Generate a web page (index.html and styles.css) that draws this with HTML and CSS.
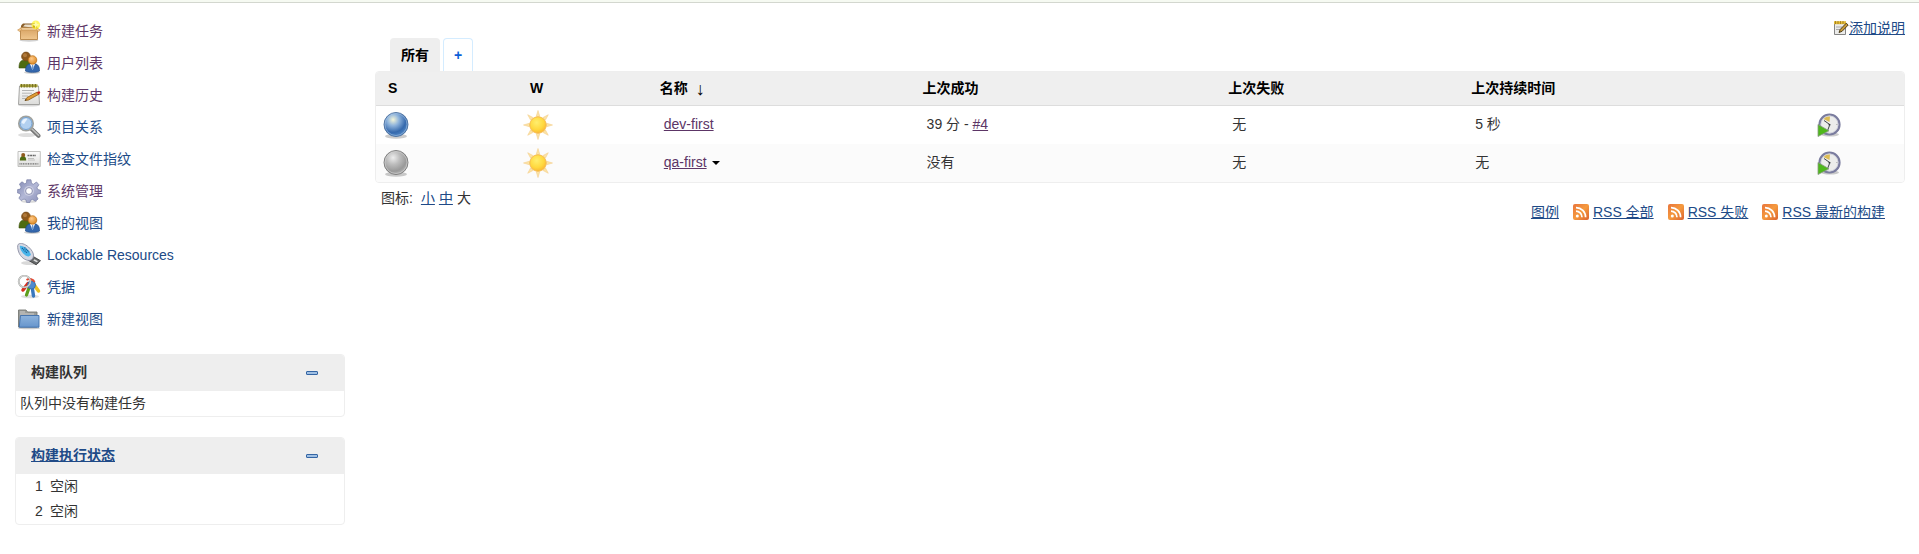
FILE: index.html
```html
<!DOCTYPE html>
<html lang="zh-CN">
<head>
<meta charset="utf-8">
<title>所有 [Jenkins]</title>
<link rel="stylesheet" href="styles.css">
</head>
<body>
<svg class="defs" width="0" height="0" aria-hidden="true">
  <defs>
    <radialGradient id="gBlue" cx="0.38" cy="0.3" r="0.7"><stop offset="0" stop-color="#f4f5d8"/><stop offset="0.35" stop-color="#8fb4dc"/><stop offset="0.75" stop-color="#3569ad"/><stop offset="1" stop-color="#4f86c4"/></radialGradient>
    <radialGradient id="gGrey" cx="0.38" cy="0.3" r="0.7"><stop offset="0" stop-color="#ededed"/><stop offset="0.4" stop-color="#bdbdbd"/><stop offset="0.8" stop-color="#999"/><stop offset="1" stop-color="#b0b0b0"/></radialGradient>
    <radialGradient id="gSun" cx="0.42" cy="0.35" r="0.7"><stop offset="0" stop-color="#ffee6e"/><stop offset="0.6" stop-color="#ffd93f"/><stop offset="1" stop-color="#f9b233"/></radialGradient>
    <radialGradient id="gHead" cx="0.4" cy="0.35" r="0.7"><stop offset="0" stop-color="#ffc98a"/><stop offset="1" stop-color="#d9861c"/></radialGradient>
    <linearGradient id="gBox" x1="0" y1="0" x2="0" y2="1"><stop offset="0" stop-color="#d9a566"/><stop offset="1" stop-color="#f0c78e"/></linearGradient>
    <linearGradient id="gPaper" x1="0" y1="0" x2="0" y2="1"><stop offset="0" stop-color="#fdfdfd"/><stop offset="1" stop-color="#dcdcda"/></linearGradient>
    <linearGradient id="gFolder" x1="0" y1="0" x2="0" y2="1"><stop offset="0" stop-color="#8db3dd"/><stop offset="1" stop-color="#6795cc"/></linearGradient>
    <linearGradient id="gRss" x1="0" y1="0" x2="1" y2="1"><stop offset="0" stop-color="#e8743c"/><stop offset="0.5" stop-color="#f59a3e"/><stop offset="1" stop-color="#dc6330"/></linearGradient>
    <linearGradient id="gGear" x1="0" y1="0" x2="1" y2="1"><stop offset="0" stop-color="#8289b4"/><stop offset="0.5" stop-color="#b3b8d6"/><stop offset="1" stop-color="#8a8fb8"/></linearGradient>
    <symbol id="people" viewBox="0 0 24 24">
      <path d="M2 17c0-5 1-8 6-8s6 3 6 8z" fill="#4e6b12" stroke="#3c530c" stroke-width=".6"/>
      <circle cx="9" cy="5.5" r="4.4" fill="#8f5a1d" stroke="#6f4413" stroke-width=".7"/><circle cx="8" cy="4.2" r="2" fill="#b98242" opacity=".8"/>
      <ellipse cx="15" cy="21.5" rx="8" ry="1.5" fill="#000" opacity=".18"/>
      <path d="M8.500 20c0-4 1-7.500 7-7.500s7 3.500 7 7.500c-2 1.800-12 1.800-14 0z" fill="#3468ae" stroke="#204a87" stroke-width=".7"/>
      <path d="M13 13l2.500 6 2.500-6z" fill="#fff"/><path d="M15 14h1.200l.5 3.500-1.100 1.500-1.100-1.500z" fill="#6e97cd"/>
      <circle cx="15.500" cy="9" r="4.300" fill="url(#gHead)" stroke="#b96c12" stroke-width=".7"/>
    </symbol>
    <symbol id="sun" viewBox="0 0 32 32">
      <g fill="#fbe3a6" stroke="#f5cf8b" stroke-width=".6">
        <path d="M14.200 7.500L16 1.500l1.800 6z"/>
        <path d="M14.200 7.500L16 1.500l1.800 6z" transform="rotate(45 16 16)"/><path d="M14.200 7.500L16 1.500l1.800 6z" transform="rotate(90 16 16)"/><path d="M14.200 7.500L16 1.500l1.800 6z" transform="rotate(135 16 16)"/><path d="M14.200 7.500L16 1.500l1.800 6z" transform="rotate(180 16 16)"/><path d="M14.200 7.500L16 1.500l1.800 6z" transform="rotate(225 16 16)"/><path d="M14.200 7.500L16 1.500l1.800 6z" transform="rotate(270 16 16)"/><path d="M14.200 7.500L16 1.500l1.800 6z" transform="rotate(315 16 16)"/>
      </g>
      <circle cx="16" cy="16" r="8.200" fill="url(#gSun)" stroke="#f6b94a" stroke-width=".9"/>
    </symbol>
    <symbol id="build" viewBox="0 0 24 24">
      <ellipse cx="13" cy="21.500" rx="9" ry="2" fill="#000" opacity=".2"/>
      <circle cx="12.500" cy="11.500" r="10" fill="#ecedeb" stroke="#7a7c9e" stroke-width="2.200"/>
      <circle cx="12.500" cy="11.500" r="8.600" fill="none" stroke="#c3c4d4" stroke-width=".7"/>
      <path d="M12.500 9L6.500 6A8 8 0 0 1 13 3.600z" fill="#dcbc55"/>
      <path d="M7 7.500l5 3.500M12.500 12.500l-1.700 4.500" stroke="#2e3436" stroke-width=".9" fill="none"/><circle cx="12.500" cy="11.700" r="1" fill="#2e3436"/>
      <path d="M19.300 11.500h1.200" stroke="#aaa"/>
      <path d="M1 11.500l11 6.300L1 23.500z" fill="#4fb81c" stroke="#8a9a84" stroke-width=".8"/>
    </symbol>
    <symbol id="rss" viewBox="0 0 16 16">
      <rect width="16" height="16" rx="2" fill="url(#gRss)"/>
      <circle cx="4.300" cy="11.900" r="1.500" fill="#fff"/>
      <path d="M3 7.200a6 6 0 0 1 6 6M3 3.600a9.500 9.500 0 0 1 9.600 9.600" fill="none" stroke="#fff" stroke-width="1.700"/>
    </symbol>
    <symbol id="minus" viewBox="0 0 12 4">
      <rect x=".5" y=".5" width="11" height="3" rx=".5" fill="#9fbfe3" stroke="#3465a4"/>
    </symbol>
  </defs>
</svg>
<div class="topbar"></div>
<div class="layout">
  <aside class="side">
    <nav class="tasks">
      <a class="visited" href="#newJob"><svg class="ico" viewBox="0 0 24 24"><ellipse cx="12" cy="21.300" rx="9.500" ry="1.400" fill="#000" opacity=".18"/><path d="M4 6.500L6 4.500h12l2 2v4H4z" fill="#8a5e28"/><path d="M6 7.500l2-2h8v3z" fill="#eadfcb"/><path d="M3.500 10h17v10.500h-17z" fill="url(#gBox)" stroke="#b07a36" stroke-width=".8"/><path d="M4 9L.6 11l2 1.500L6 9.600zM20 9l3.400 2-2 1.500L18 9.600z" fill="#f0c78e" stroke="#c28c48" stroke-width=".6"/><path d="M3.500 8.800h17L19 11H5z" fill="#f5d5a6" stroke="#c28c48" stroke-width=".5"/><circle cx="18.800" cy="5.800" r="4.400" fill="#fff200" opacity=".6"/><path d="M18.800 2l1 2.700 2.900 1.100-2.900 1-1 2.900-1-2.900-2.900-1 2.900-1.100z" fill="#fffcb0"/></svg>新建任务</a>
      <a class="visited" href="#people"><svg class="ico"><use href="#people"/></svg>用户列表</a>
      <a class="visited" href="#builds"><svg class="ico" viewBox="0 0 24 24"><ellipse cx="12" cy="22.300" rx="11" ry="1.300" fill="#000" opacity=".15"/><path d="M2.500 3h19l1 18.500h-21z" fill="url(#gPaper)" stroke="#9b9b98" stroke-width=".9"/><path d="M3 1.300h17.500v2.900H3z" fill="#a8a23c"/><path d="M4.500 1v3.500M7.200 1v3.500M10 1v3.500M12.800 1v3.500M15.600 1v3.500M18.400 1v3.500" stroke="#716c1f"/><path d="M5 7.500h12M5 10.200h10M5 13h6M5 15.500h4" stroke="#b5b5b5"/><path d="M8 17.500l2-3L20.300 9l1.500 2.300L11.500 17z" fill="#e09a34" stroke="#8a5b13" stroke-width=".8"/><path d="M20 9.200l1.500-.8c1.500-.4 2.200 1.300 1.200 2.200l-1.200.8z" fill="#cc2a1c"/><path d="M7.800 17.700l1-1.500.9.900z" fill="#222"/></svg>构建历史</a>
      <a href="#relations"><svg class="ico" viewBox="0 0 24 24"><ellipse cx="10" cy="20" rx="9" ry="2" fill="#000" opacity=".13"/><path d="M14.500 14l7 6.800" stroke="#777" stroke-width="4" stroke-linecap="round"/><path d="M14.500 13.500l7 6.800" stroke="#bfc0be" stroke-width="1.600" stroke-linecap="round"/><circle cx="9" cy="8.500" r="7.200" fill="#c4dbf3" stroke="#a0a29e" stroke-width="1.700"/><circle cx="9" cy="8.500" r="6" fill="#b2d0f0" stroke="#729fcf"/><path d="M4.500 8a4.700 4.700 0 0 1 6-4.200L7 9z" fill="#eef6ff" opacity=".9"/></svg>项目关系</a>
      <a href="#fingerprint"><svg class="ico" viewBox="0 0 24 24"><path d="M1 4.500h22.300v15H1z" fill="url(#gPaper)" stroke="#bcbcba" stroke-width=".9"/><path d="M2.800 13.500c0-3 1-4.500 3.200-4.500s3.200 1.500 3.200 4.500z" fill="#4e6b12"/><circle cx="6.200" cy="8" r="2" fill="#8f5a1d"/><path d="M10.500 8.500h8.500" stroke="#666" stroke-width="1.400" stroke-dasharray="2 .6"/><path d="M11 11.500h6M11 13h7" stroke="#c0c0be"/><path d="M2.500 16.800h19" stroke="#666" stroke-width="1.200" stroke-dasharray="1 .7"/></svg>检查文件指纹</a>
      <a class="visited" href="#manage"><svg class="ico" viewBox="0 0 24 24"><ellipse cx="12" cy="22.500" rx="8" ry="1.300" fill="#000" opacity=".15"/><path d="M9.800.8h4.200l.5 3.600 2 .8 3-2.200 2.400 2.700-1.900 3 .8 1.900 2.700.6v3.200l-3.100.7-.9 2 1.600 2.900-2.700 2.300-2.800-1.900-2 .8-.7 2.300H9.600L9 20.900l-2-.8-2.900 1.500-2.200-2.500 1.800-2.900-.7-1.700L.6 14v-3.400l2.700-.5.8-2-1.700-3L5 2.800l2.700 2 1.600-.6z" fill="url(#gGear)" stroke="#797fa6" stroke-width=".7"/><circle cx="12" cy="12" r="5" fill="#c9cce0"/><circle cx="12" cy="12" r="3.400" fill="#fff" stroke="#8085a9" stroke-width=".9"/></svg>系统管理</a>
      <a href="#my-views"><svg class="ico"><use href="#people"/></svg>我的视图</a>
      <a href="#lockable"><svg class="ico" viewBox="0 0 24 24"><ellipse cx="13" cy="20" rx="9" ry="2" fill="#000" opacity=".15"/><path d="M14.500 12.500l9 5.200-4.300 4.100-8-4.600z" fill="#66696a" stroke="#333" stroke-width=".8"/><path d="M17.500 16.200l3.500 2-1.300 1.100-3.400-1.900z" fill="#ddd"/><path d="M1.200 1.400C3.500-.8 8 1 11.500 4c3.300 2.800 5.300 6.300 5 9-.3 2.400-2 4.200-4 4.400C8 17.600 3.500 14 1.700 9 .6 6 .2 2.600 1.200 1.400z" fill="#d5d8e3" stroke="#8d90a4" stroke-width=".9"/><path d="M2.800 3c2-1.200 10 3.500 11.200 9l-2.400 1.500C7 13 3 7.500 2.800 3z" fill="#48b4ea"/><path d="M5 5l5 5M7.500 4.500L12 9" stroke="#1b5e95" stroke-width="1.300" stroke-dasharray="1.200 .7"/></svg>Lockable Resources</a>
      <a href="#credentials"><svg class="ico" viewBox="0 0 24 24"><ellipse cx="13" cy="21.500" rx="9" ry="1.800" fill="#000" opacity=".13"/><g fill="none" stroke-linecap="round"><path d="M11 8.500L6 15" stroke="#d7301f" stroke-width="3.500"/><path d="M15 7l6.500 9" stroke="#e9c022" stroke-width="3.500"/><path d="M13 10L9.500 20" stroke="#5d9e1c" stroke-width="3.200"/><path d="M15 11l1.500 10" stroke="#3a78bd" stroke-width="3.400"/></g><circle cx="14.500" cy="10" r="4" fill="#4f8bce" stroke="#2c64a6" stroke-width=".7"/><path d="M9.500 5a5 4 0 0 1 8 2" stroke="#e34b36" stroke-width="2" fill="none"/><circle cx="7.500" cy="6.500" r="5.800" fill="none" stroke="#a5a7a4" stroke-width="1.800"/><circle cx="7.500" cy="6.500" r="5.800" fill="none" stroke="#eee" stroke-width=".7"/></svg>凭据</a>
      <a href="#newView"><svg class="ico" viewBox="0 0 24 24"><path d="M1.500 20V3h7.500l1.500 2H20v15z" fill="#9b9d99" stroke="#777975" stroke-width=".9"/><path d="M3 5h5M3 7h14" stroke="#ccc"/><ellipse cx="12" cy="21.200" rx="11" ry="1" fill="#000" opacity=".2"/><path d="M3.500 8.500h18.500v11.700H2.200z" fill="url(#gFolder)" stroke="#3f6fab" stroke-width=".9"/></svg>新建视图</a>
    </nav>
    <section class="pane">
      <header class="pane-head"><span>构建队列</span><button type="button" class="fold" aria-label="折叠构建队列"><svg><use href="#minus"/></svg></button></header>
      <p class="queue">队列中没有构建任务</p>
    </section>
    <section class="pane">
      <header class="pane-head"><a href="#computer">构建执行状态</a><button type="button" class="fold" aria-label="折叠构建执行状态"><svg><use href="#minus"/></svg></button></header>
      <ol class="executors">
        <li><span class="num">1</span>空闲</li>
        <li><span class="num">2</span>空闲</li>
      </ol>
    </section>
  </aside>
  <main class="main">
    <div class="describe"><a href="#editDescription"><svg viewBox="0 0 16 16"><path d="M1.500 2.500h11v12h-11z" fill="#ececea" stroke="#777" stroke-width=".9"/><path d="M1 1.200h12v3H1z" fill="#e3bb38"/><path d="M2.500 1v3M5 1v3M7.500 1v3M10 1v3" stroke="#9a7716" stroke-width=".8"/><path d="M3 7h6M3 9.500h4" stroke="#aaa"/><path d="M6 12.500l1.200-3 6-6.300 2 1.800-6.100 6.300z" fill="#c79a38" stroke="#3f3110" stroke-width=".9"/></svg><span>添加说明</span></a></div>
    <div class="tabs"><a class="tab active" href="#all">所有</a><a class="tab add" href="#newView">+</a></div>
    <table class="jobs">
      <colgroup><col class="c-s"><col class="c-w"><col class="c-name"><col class="c-ok"><col class="c-fail"><col class="c-dur"><col class="c-act"></colgroup>
      <thead><tr><th class="first">S</th><th>W</th><th>名称<span class="sort">↓</span></th><th>上次成功</th><th>上次失败</th><th>上次持续时间</th><th></th></tr></thead>
      <tbody>
        <tr>
          <td class="pic first"><svg class="big" viewBox="0 0 32 32"><ellipse cx="16" cy="27.300" rx="11" ry="2.500" fill="#000" opacity=".2"/><circle cx="16" cy="15.500" r="12" fill="url(#gBlue)" stroke="#4a6e9c" stroke-width=".9"/><circle cx="16" cy="15.500" r="11" fill="none" stroke="#a9c6e6" stroke-width=".8" opacity=".7"/></svg></td>
          <td class="pic"><svg class="big"><use href="#sun"/></svg></td>
          <td><a class="visited" href="#dev-first">dev-first</a></td>
          <td>39 分 - <a class="visited" href="#4">#4</a></td><td>无</td><td>5 秒</td>
          <td class="pic"><a class="run" href="#build-dev" aria-label="构建 dev-first"><svg><use href="#build"/></svg></a></td>
        </tr>
        <tr>
          <td class="pic first"><svg class="big" viewBox="0 0 32 32"><ellipse cx="16" cy="27.300" rx="11" ry="2.500" fill="#000" opacity=".2"/><circle cx="16" cy="15.500" r="12" fill="url(#gGrey)" stroke="#777" stroke-width=".9"/><circle cx="16" cy="15.500" r="11" fill="none" stroke="#d5d5d5" stroke-width=".8" opacity=".7"/></svg></td>
          <td class="pic"><svg class="big"><use href="#sun"/></svg></td>
          <td><a class="visited" href="#qa-first">qa-first</a><span class="caret"></span></td>
          <td>没有</td><td>无</td><td>无</td>
          <td class="pic"><a class="run" href="#build-qa" aria-label="构建 qa-first"><svg><use href="#build"/></svg></a></td>
        </tr>
      </tbody>
    </table>
    <div class="below">
      <div class="sizes"><span class="label">图标:</span><a href="#s">小</a><a href="#m">中</a><span>大</span></div>
      <div class="feeds">
        <a href="#legend"><span>图例</span></a>
        <a href="#rssAll"><svg><use href="#rss"/></svg><span>RSS 全部</span></a>
        <a href="#rssFailed"><svg><use href="#rss"/></svg><span>RSS 失败</span></a>
        <a href="#rssLatest"><svg><use href="#rss"/></svg><span>RSS 最新的构建</span></a>
      </div>
    </div>
  </main>
</div>
</body>
</html>
```
FILE: styles.css
```css
* { box-sizing: border-box; }
body {
  margin: 0;
  background: #fff;
  color: #333;
  font: 14px/20px "Liberation Sans", "Noto Sans CJK SC", sans-serif;
}
a { color: #204a87; }
a.visited { color: #5c3566; }
.defs { position: absolute; }
.topbar { height: 3px; background: #f6faf2; border-bottom: 1px solid #d3d7cf; }
.layout { display: flex; }

.side { flex: none; width: 360px; padding: 12px 15px 0; }
.tasks { display: flex; flex-direction: column; margin-bottom: 19px; }
.tasks a { display: flex; align-items: center; gap: 6px; height: 32px; padding-left: 2px; text-decoration: none; }
.ico { flex: none; width: 24px; height: 24px; }
.pane { margin-bottom: 20px; border: 1px solid #eee; border-radius: 4px; overflow: hidden; }
.pane-head { display: flex; align-items: center; justify-content: space-between; height: 36px; padding: 0 26px 0 15px; background: #eee; font-weight: bold; }
.pane-head > :first-child { padding-bottom: 2px; }
.fold { display: flex; padding: 0; border: 0; background: none; }
.fold svg { width: 12px; height: 4px; }
.queue { margin: 0; padding: 2px 4px 3px; }
.executors { margin: 0; padding: 0; list-style: none; }
.executors li { display: flex; height: 25px; align-items: center; padding: 0 0 2px 19px; }
.num { width: 15px; }

.main { flex: 1; min-width: 0; padding: 14px 14px 0 15px; }
.describe { display: flex; justify-content: flex-end; height: 21px; }
.describe a, .feeds a { display: flex; align-items: center; text-decoration: none; }
.describe span, .feeds span { text-decoration: underline; }
.describe svg { width: 16px; height: 16px; }
.tabs { display: flex; gap: 3px; padding-left: 15px; }
.tab { height: 33px; padding: 6px 10px; border: 1px solid #eee; border-bottom: 0; border-radius: 4px 4px 0 0; background: #eee; font-weight: bold; text-decoration: none; }
.tab.active { color: #000; }
.tab.add { color: #0b5fd8; background: #fff; border-color: #d4ecff; }

.jobs { width: 100%; table-layout: fixed; border: 1px solid #eee; border-radius: 4px; border-collapse: separate; border-spacing: 0; overflow: hidden; }
.c-s { width: 9.55%; }
.c-w { width: 8.5%; }
.c-name { width: 17.2%; }
.c-ok { width: 20%; }
.c-fail { width: 15.9%; }
.c-dur { width: 22.85%; }
.c-act { width: 6%; }
.jobs th { height: 34px; padding: 0 8px 2px; background: #efefef; border-bottom: 1px solid #ddd; color: #000; text-align: left; }
.jobs th.first { padding-left: 12px; }
.jobs td { height: 38px; padding: 0 12px 2px; }
.jobs td.pic { padding: 0; }
.jobs td.first { padding-left: 4px; }
.jobs tbody tr:nth-child(even) { background: #fbfbfb; }
.jobs svg { display: block; }
.big { width: 32px; height: 32px; }
.run { display: flex; padding-left: 5px; }
.run svg { width: 24px; height: 24px; }
.sort { margin-left: 8px; font-size: 18px; font-weight: normal; line-height: 16px; vertical-align: middle; }
.caret { display: inline-block; margin-left: 5px; vertical-align: middle; border: 4px solid transparent; border-top-color: #000; border-bottom: 0; }

.below { display: flex; justify-content: space-between; padding: 5px 20px 0 6px; }
.sizes { display: flex; gap: 4px; }
.sizes .label { margin-right: 4px; }
.feeds { display: flex; gap: 14px; padding-top: 14px; }
.feeds a { gap: 4px; }
.feeds svg { width: 16px; height: 16px; }
```
